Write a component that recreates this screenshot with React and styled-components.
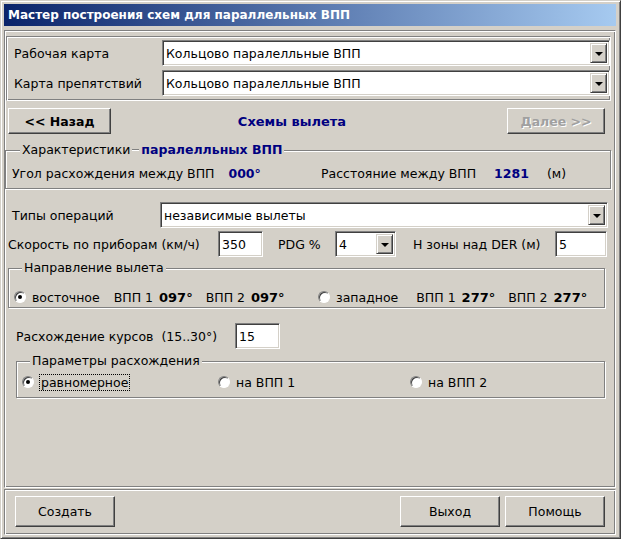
import React from 'react';
import styled, { createGlobalStyle, css } from 'styled-components';

const GlobalStyle = createGlobalStyle`
  html, body {
    margin: 0;
    padding: 0;
    background: #d4d0c8;
  }
  body {
    font-family: "DejaVu Sans", Tahoma, sans-serif;
    font-size: 12.5px;
    color: #000;
  }
`;

const Window = styled.div`
  width: 621px;
  height: 539px;
  box-sizing: border-box;
  display: flex;
  flex-direction: column;
  background: #d4d0c8;
  border: 1px solid;
  border-color: #d4d0c8 #404040 #404040 #d4d0c8;
  box-shadow: inset 1px 1px #fff, inset -1px -1px #808080;
  padding: 3px 4px 3px 3px;
`;

const TitleBar = styled.div`
  height: 22px;
  flex: none;
  display: flex;
  align-items: center;
  padding-left: 4px;
  background: linear-gradient(to right, #0a246a, #a6caf0);
  color: #fff;
  font-weight: bold;
  font-size: 12px;
`;

const MainPanel = styled.div`
  flex: 1;
  margin-top: 4px;
  display: flex;
  flex-direction: column;
  border: 1px solid;
  border-color: #808080 #fff #fff #808080;
  box-shadow: inset 1px 1px #fff, inset -1px -1px #808080;
`;

const BottomPanel = styled.div`
  flex: none;
  height: 46px;
  box-sizing: border-box;
  margin-top: 1px;
  display: flex;
  align-items: center;
  gap: 5px;
  padding: 0 10px 2px 10px;
  border: 1px solid;
  border-color: #808080 #fff #fff #808080;
  box-shadow: inset 1px 1px #fff, inset -1px -1px #808080;
`;

const BoxGroup = styled.div`
  margin: 5px 4px 0 1px;
  padding: 3px 3px 4px 7px;
  display: flex;
  flex-direction: column;
  gap: 4px;
  border: 1px solid;
  border-color: #808080 #fff #fff #808080;
  box-shadow: inset 1px 1px #fff, inset -1px -1px #808080;
`;

const Group = styled.fieldset`
  margin: ${p => p.$mt || 0}px ${p => p.$mr || 0}px 0 ${p => p.$ml || 0}px;
  padding: ${p => p.$pt || 0}px 0 ${p => p.$pb || 0}px ${p => p.$pl || 0}px;
  min-width: 0;
  border: 1px solid #808080;
  box-shadow: inset 1px 1px #fff, 1px 1px #fff;
`;

const Legend = styled.legend`
  margin-left: ${p => p.$ml || 6}px;
  padding: 0 2px;
  background: #d4d0c8;
  display: flex;
  align-items: center;
  line-height: 16px;
`;

const LegendRule = styled.span`
  width: 7px;
  height: 0;
  margin: 0 2px;
  border-top: 1px solid #808080;
  border-bottom: 1px solid #fff;
`;

const Row = styled.div`
  display: flex;
  align-items: center;
  height: ${p => p.$h || 26}px;
  margin-top: ${p => p.$mt || 0}px;
  padding-left: ${p => p.$pl || 0}px;
`;

const Label = styled.span`
  flex: none;
  width: ${p => (p.$w ? `${p.$w}px` : 'auto')};
  padding-left: ${p => p.$pl || 0}px;
  box-sizing: border-box;
  white-space: nowrap;
`;

const Navy = styled.span`
  color: #000080;
  font-weight: bold;
  margin-left: ${p => p.$ml || 0}px;
`;

const Strong = styled.b`
  margin-left: 6px;
  font-size: 13px;
`;

const Sunken = styled.div`
  flex: none;
  width: ${p => p.$w}px;
  height: ${p => p.$h || 26}px;
  box-sizing: border-box;
  display: flex;
  align-items: stretch;
  background: #fff;
  border: 1px solid;
  border-color: #808080 #fff #fff #808080;
  box-shadow: inset 1px 1px #404040, inset -1px -1px #d4d0c8;
  padding: 2px;
`;

const FieldText = styled.span`
  flex: 1;
  display: flex;
  align-items: center;
  padding-left: 1px;
  white-space: nowrap;
  overflow: hidden;
`;

const DropButton = styled.span`
  flex: none;
  width: 17px;
  box-sizing: border-box;
  display: flex;
  align-items: center;
  justify-content: center;
  background: #d4d0c8;
  border: 1px solid;
  border-color: #d4d0c8 #404040 #404040 #d4d0c8;
  box-shadow: inset 1px 1px #fff, inset -1px -1px #808080;
  &::after {
    content: '';
    border-left: 4px solid transparent;
    border-right: 4px solid transparent;
    border-top: 4px solid #000;
    margin-top: 1px;
  }
`;

const Button = styled.button`
  flex: none;
  width: ${p => p.$w}px;
  height: ${p => p.$h || 26}px;
  margin-left: ${p => p.$ml || 0}px;
  box-sizing: border-box;
  padding: 0;
  font-family: inherit;
  font-size: 12.5px;
  font-weight: ${p => (p.$bold ? 'bold' : 'normal')};
  color: #000;
  background: #d4d0c8;
  border: 1px solid;
  border-color: #fff #404040 #404040 #fff;
  box-shadow: inset -1px -1px #808080;
  ${p => p.disabled && css`
    color: #a0a0a0;
    text-shadow: 1px 1px #fff;
  `}
`;

const StepTitle = styled.span`
  flex: 1;
  text-align: center;
  color: #000080;
  font-weight: bold;
  font-size: 13px;
  padding-right: 34px;
`;

const RadioItem = styled.label`
  display: flex;
  align-items: center;
  gap: 6px;
  white-space: nowrap;
  margin-left: ${p => p.$ml || 0}px;
  width: ${p => (p.$w ? `${p.$w}px` : 'auto')};
`;

const RadioCircle = styled.span`
  flex: none;
  width: 12px;
  height: 12px;
  box-sizing: border-box;
  border-radius: 50%;
  background: #fff;
  border: 1px solid;
  border-color: #808080 #fff #fff #808080;
  box-shadow: inset 1px 1px #404040;
  display: flex;
  align-items: center;
  justify-content: center;
  ${p => p.$checked && css`
    &::after {
      content: '';
      width: 4px;
      height: 4px;
      border-radius: 50%;
      background: #000;
    }
  `}
`;

const Focus = styled.span`
  outline: 1px dotted #000;
  outline-offset: 0;
  padding: 0 1px;
`;

const Gap = styled.span`
  margin-left: ${p => p.$ml || 0}px;
`;

const Spacer = styled.div`
  flex: ${p => (p.$w ? 'none' : 1)};
  width: ${p => (p.$w ? `${p.$w}px` : 'auto')};
`;

function Combo({ w, value }) {
  return (
    <Sunken $w={w}>
      <FieldText>{value}</FieldText>
      <DropButton />
    </Sunken>
  );
}

function Edit({ w, value }) {
  return (
    <Sunken $w={w}>
      <FieldText>{value}</FieldText>
    </Sunken>
  );
}

function Radio({ checked, children, ml, w }) {
  return (
    <RadioItem $ml={ml} $w={w}>
      <RadioCircle $checked={checked} />
      {children}
    </RadioItem>
  );
}

export default function App() {
  return (
    <>
      <GlobalStyle />
      <Window>
        <TitleBar>Мастер построения схем для параллельных ВПП</TitleBar>
        <MainPanel>
          <BoxGroup>
            <Row>
              <Label $w={148}>Рабочая карта</Label>
              <Combo w={448} value="Кольцово паралелльные ВПП" />
            </Row>
            <Row>
              <Label $w={148}>Карта препятствий</Label>
              <Combo w={448} value="Кольцово паралелльные ВПП" />
            </Row>
          </BoxGroup>

          <Row $mt={7} $pl={3}>
            <Button $w={103} $bold>&lt;&lt; Назад</Button>
            <StepTitle>Схемы вылета</StepTitle>
            <Button $w={98} $bold disabled>Далее &gt;&gt;</Button>
            <Spacer $w={10} />
          </Row>

          <Group $mt={8} $mr={4} $pt={7} $pb={7} $pl={6}>
            <Legend $ml={8}>
              Характеристики<LegendRule /><Navy>паралелльных ВПП</Navy>
            </Legend>
            <Row $h={16}>
              <Label $w={309}>
                Угол расхождения между ВПП <Navy $ml={10}>000°</Navy>
              </Label>
              <Label>
                Расстояние между ВПП <Navy $ml={14}>1281</Navy>
                <Gap $ml={18}>(м)</Gap>
              </Label>
            </Row>
          </Group>

          <Row $mt={13} $pl={7}>
            <Label $w={148}>Типы операций</Label>
            <Combo w={448} value="независимые вылеты" />
          </Row>

          <Row $mt={3} $pl={3}>
            <Label $w={210}>Скорость по приборам (км/ч)</Label>
            <Edit w={45} value="350" />
            <Label $w={72} $pl={15}>PDG %</Label>
            <Combo w={61} value="4" />
            <Label $w={159} $pl={17}>H зоны над DER (м)</Label>
            <Edit w={52} value="5" />
          </Row>

          <Group $mt={3} $ml={3} $mr={10} $pt={13} $pb={2} $pl={5}>
            <Legend $ml={8}>Направление вылета</Legend>
            <Row $h={16}>
              <Radio checked w={304}>
                <span>
                  восточное<Gap $ml={14}>ВПП 1</Gap><Strong>097°</Strong>
                  <Gap $ml={13}>ВПП 2</Gap><Strong>097°</Strong>
                </span>
              </Radio>
              <Radio>
                <span>
                  западное<Gap $ml={18}>ВПП 1</Gap><Strong>277°</Strong>
                  <Gap $ml={13}>ВПП 2</Gap><Strong>277°</Strong>
                </span>
              </Radio>
            </Row>
          </Group>

          <Row $mt={15} $pl={11}>
            <Label $w={219}>Расхождение курсов&nbsp; (15..30°)</Label>
            <Edit w={45} value="15" />
          </Row>

          <Group $mt={4} $ml={11} $mr={10} $pt={4} $pb={6} $pl={5}>
            <Legend $ml={8}>Параметры расхождения</Legend>
            <Row $h={18}>
              <Radio checked w={196}>
                <Focus>равномерное</Focus>
              </Radio>
              <Radio w={192}>на ВПП 1</Radio>
              <Radio>на ВПП 2</Radio>
            </Row>
          </Group>
        </MainPanel>

        <BottomPanel>
          <Button $w={100} $h={31}>Создать</Button>
          <Spacer />
          <Button $w={100} $h={31}>Выход</Button>
          <Button $w={100} $h={31}>Помощь</Button>
        </BottomPanel>
      </Window>
    </>
  );
}
